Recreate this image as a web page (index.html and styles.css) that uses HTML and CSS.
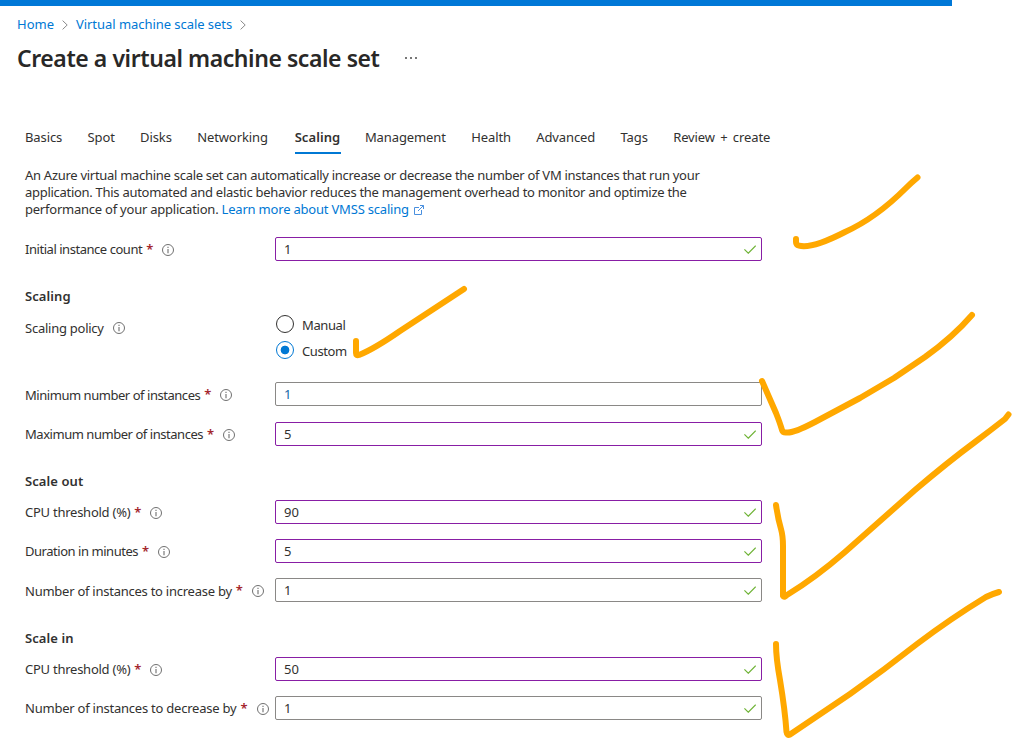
FILE: index.html
```
<!DOCTYPE html>
<html lang="en">
<head>
<meta charset="utf-8">
<title>Create a virtual machine scale set</title>
<link rel="stylesheet" href="styles.css">
</head>
<body>
<svg class="symbols" aria-hidden="true">
  <symbol id="info" viewBox="0 0 12 12"><circle cx="6" cy="6" r="5.5" fill="none" stroke="#707070" stroke-width="1"/><path d="M6 5v4.2M6 2.8v1.3" stroke="#858585" stroke-width="1.3"/></symbol>
  <symbol id="tick" viewBox="0 0 12 9"><path d="M.4 4.4 4.3 8.2 11.7.6" fill="none" stroke="#6fb336" stroke-width="1.2"/></symbol>
  <symbol id="chevron" viewBox="0 0 6 10"><path d="M.6.6 5.2 5 .6 9.4" fill="none" stroke="#8a8a8a" stroke-width="1"/></symbol>
</svg>
<div class="page">
  <div class="topbar"></div>
  <nav class="breadcrumb">
    <a class="crumb home">Home</a><svg class="chevron"><use href="#chevron"/></svg>
    <a class="crumb sets">Virtual machine scale sets</a><svg class="chevron"><use href="#chevron"/></svg>
  </nav>
  <header class="title-row"><h1 class="title">Create a virtual machine scale set</h1><svg class="more" viewBox="0 0 12 2"><path d="M0 0h2v2H0zM5 0h2v2H5zM10 0h2v2h-2z" fill="#777"/></svg></header>
  <main class="content">
    <nav class="tabs">
      <a class="tab">Basics</a><a class="tab">Spot</a><a class="tab">Disks</a><a class="tab">Networking</a><a class="tab active">Scaling</a><a class="tab">Management</a><a class="tab">Health</a><a class="tab">Advanced</a><a class="tab">Tags</a><a class="tab review">Review + create</a>
    </nav>
    <p class="intro">An Azure virtual machine scale set can automatically increase or decrease the number of VM instances that run your<br>application. This automated and elastic behavior reduces the management overhead to monitor and optimize the<br><span class="lead">performance of your application. </span><a class="link">Learn more about VMSS scaling</a><svg class="external" viewBox="0 0 10 10"><path d="M5 2.500H.5v7h7V5M6 .5h3.500V4M9.500.5 4 6" fill="none" stroke="#4a90df"/></svg></p>

    <div class="row first"><label class="label"><span class="name tight">Initial instance count</span><b class="req">*</b><svg class="info"><use href="#info"/></svg></label><div class="field edited"><span class="value">1</span><svg class="tick"><use href="#tick"/></svg></div></div>

    <h2 class="heading">Scaling</h2>
    <div class="row policy"><label class="label low"><span class="name">Scaling policy</span><svg class="info"><use href="#info"/></svg></label>
      <div class="radios">
        <div class="option"><span class="radio"></span><span class="option-text">Manual</span></div>
        <div class="option"><span class="radio checked"></span><span class="option-text">Custom</span></div>
      </div>
    </div>
    <div class="row minimum"><label class="label low"><span class="name tight">Minimum number of instances</span><b class="req">*</b><svg class="info"><use href="#info"/></svg></label><div class="field"><span class="value blue">1</span></div></div>
    <div class="row"><label class="label"><span class="name tight">Maximum number of instances</span><b class="req">*</b><svg class="info"><use href="#info"/></svg></label><div class="field edited"><span class="value">5</span><svg class="tick"><use href="#tick"/></svg></div></div>

    <h2 class="heading">Scale out</h2>
    <div class="row"><label class="label"><span class="name">CPU threshold (%)</span><b class="req">*</b><svg class="info"><use href="#info"/></svg></label><div class="field edited"><span class="value">90</span><svg class="tick"><use href="#tick"/></svg></div></div>
    <div class="row"><label class="label"><span class="name tight">Duration in minutes</span><b class="req">*</b><svg class="info"><use href="#info"/></svg></label><div class="field edited"><span class="value">5</span><svg class="tick"><use href="#tick"/></svg></div></div>
    <div class="row"><label class="label low"><span class="name">Number of instances to increase by</span><b class="req">*</b><svg class="info"><use href="#info"/></svg></label><div class="field"><span class="value">1</span><svg class="tick"><use href="#tick"/></svg></div></div>

    <h2 class="heading last">Scale in</h2>
    <div class="row"><label class="label"><span class="name">CPU threshold (%)</span><b class="req">*</b><svg class="info"><use href="#info"/></svg></label><div class="field edited"><span class="value">50</span><svg class="tick"><use href="#tick"/></svg></div></div>
    <div class="row"><label class="label"><span class="name decrease">Number of instances to decrease by</span><b class="req">*</b><svg class="info"><use href="#info"/></svg></label><div class="field"><span class="value">1</span><svg class="tick"><use href="#tick"/></svg></div></div>
  </main>
  <svg class="marks" viewBox="0 0 1012 738">
    <path d="M796 239v3q0 3 3 3.600Q812 249 845 232Q876 218 906 188Q911 183 917.500 177.500"/>
    <path d="M356 341V353Q356 356 359 355Q374 349 400 331L464 289"/>
    <path d="M762 381 776 413Q780 423 782 430Q783 433 787 432.500Q794 433 815 422L860 398 894 378 925 357Q953 337 972 315"/>
    <path d="M776 505Q778 519 781 529Q783 536 783 546V596Q784 598 787 595Q815 578 845 552L915 490Q948 462 975 442Q991 430 1005 419L1008.500 414.500"/>
    <path d="M776 644Q776 658 780 680Q785 710 786.500 732Q787 736 790 734.500L850 694Q884 670 917 644Q950 619 986 597Q992 594 999 592"/>
  </svg>
</div>
</body>
</html>
```

FILE: styles.css
```
* { box-sizing: border-box; }
body { margin: 0; background: #fff; color: #323130; font: 13px/17px "Noto Sans", sans-serif; }
.symbols { display: none; }
.page { position: relative; width: 1012px; height: 738px; overflow: hidden; }
.topbar { width: 952px; height: 6px; background: #0078d7; }
.breadcrumb { display: flex; align-items: center; height: 20px; margin-top: 8px; padding-left: 17px; color: #0078d4; }
.sets { letter-spacing: -.05px; }
.chevron { width: 6px; height: 10px; margin: 2px 8px 0; }
.title-row { display: flex; align-items: center; height: 34px; margin-top: 7px; padding-left: 17px; }
.title { margin: 0; color: #292827; font-size: 23px; font-weight: 600; line-height: 34px; letter-spacing: -.43px; white-space: nowrap; }
.more { width: 12px; height: 2px; margin-left: 25px; }
.content { padding-left: 25px; }
.tabs { display: flex; gap: 25.3px; height: 31px; margin-top: 48px; letter-spacing: -.1px; white-space: nowrap; }
.tab { height: 31px; line-height: 28px; }
.active { width: 46px; margin: 0 -1px 0 1.5px; font-weight: 600; letter-spacing: .08px; border-bottom: 2px solid #0078d4; }
.review { word-spacing: 2px; }
.intro { margin: 13px 0 0; letter-spacing: -.286px; white-space: nowrap; }
.lead { letter-spacing: -.23px; }
.link { color: #0078d4; letter-spacing: -.2px; }
.external { width: 10px; height: 10px; margin-left: 5px; vertical-align: -1px; }
.row { display: grid; grid-template-columns: 250px 487px; height: 24px; margin-bottom: 15px; }
.first { margin-top: 19px; }
.label { display: flex; align-items: center; padding-top: 1px; white-space: nowrap; }
.low .name { padding-top: 2px; }
.name { letter-spacing: -.25px; }
.tight { letter-spacing: -.46px; }
.decrease { letter-spacing: -.23px; }
.req { margin-left: 4px; color: #a4262c; font-weight: 600; }
.info { flex: none; width: 12px; height: 12px; margin-left: 9px; }
.field { display: flex; align-items: center; justify-content: space-between; padding: 0 5px 0 8px; border: 1px solid #8a8886; border-radius: 2px; }
.edited { border-color: #881ea5; }
.blue { color: #1767a8; }
.tick { width: 12px; height: 9px; }
.heading { margin: 0; height: 39px; padding-top: 12px; font-size: 13px; font-weight: 600; line-height: 17px; letter-spacing: .08px; }
.last { height: 40px; padding-top: 13px; }
.policy { height: 51px; margin-bottom: 16px; }
.policy .label { height: 24px; }
.radios { display: grid; grid-template-rows: 26px 26px; margin-top: -4px; }
.option { display: flex; align-items: center; gap: 8px; padding-left: 1px; }
.option-text { padding-top: 2px; letter-spacing: -.4px; }
.radio { width: 18px; height: 18px; border: 1px solid #323130; border-radius: 50%; }
.checked { border-color: #0078d4; background: radial-gradient(circle, #0078d4 4px, transparent 4.7px); }
.minimum { margin-bottom: 16px; }
.marks { position: absolute; inset: 0; width: 1012px; height: 738px; fill: none; stroke: #ffa800; stroke-width: 6; stroke-linecap: round; stroke-linejoin: round; pointer-events: none; }
```
